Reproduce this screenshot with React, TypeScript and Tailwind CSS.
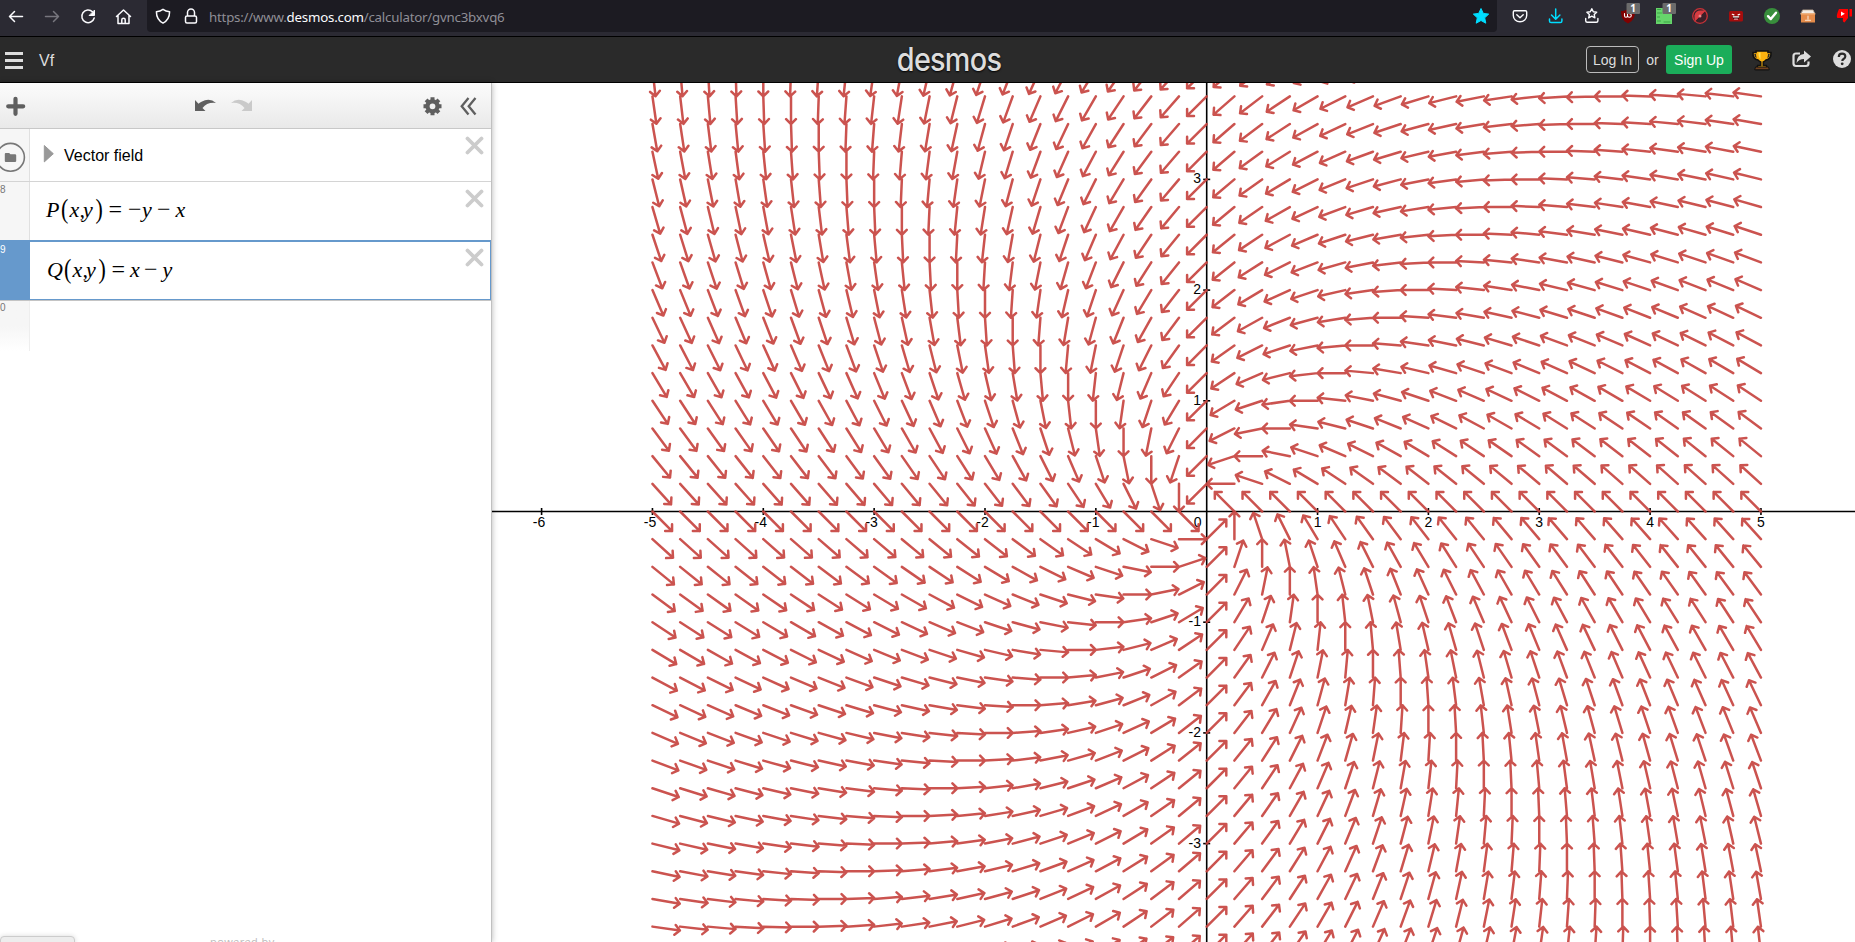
import React from "react";

const OX = 1206.7;
const OY = 511.5;
const UX = 110.85;
const UY = 110.7;
const RED = "#c74440";

function fieldPath(): string {
  const parts: string[] = [];
  for (let i = -20; i <= 20; i++) {
    for (let j = -20; j <= 20; j++) {
      const x = i / 4;
      const y = j / 4;
      const p = -y - x;
      const q = x - y;
      const m = Math.hypot(p, q);
      if (m === 0) continue;
      const sx = OX + x * UX;
      const sy = OY - y * UY;
      const dx = p / m;
      const dy = -q / m;
      const ex = sx + dx * 0.25 * UX;
      const ey = sy + dy * 0.25 * UY;
      const a = Math.atan2(dy, dx);
      const h = 6.9;
      const w = Math.PI * 0.75;
      const pt = (t: number) => `${(ex + Math.cos(t) * h).toFixed(2)} ${(ey + Math.sin(t) * h).toFixed(2)}`;
      parts.push(`M${sx.toFixed(2)} ${sy.toFixed(2)}L${ex.toFixed(2)} ${ey.toFixed(2)}M${pt(a + w)}L${ex.toFixed(2)} ${ey.toFixed(2)}L${pt(a - w)}`);
    }
  }
  return parts.join("");
}

const FIELD = fieldPath();
const XT = [-6, -5, -4, -3, -2, -1, 1, 2, 3, 4, 5];
const YT = [-3, -2, -1, 1, 2, 3];

function Graph() {
  return (
    <svg className="block h-[859px] w-[1363px]" viewBox="492 83 1363 859">
      <g stroke="#000" strokeWidth="1.6">
        <path d={`M492 ${OY}H1855M${OX} 83V942`} />
        {XT.map((t) => (
          <path key={t} d={`M${OX + t * UX} ${OY - 3.5}v7`} />
        ))}
        {YT.map((t) => (
          <path key={t} d={`M${OX - 3.5} ${OY - t * UY}h7`} />
        ))}
      </g>
      <g fontFamily="Liberation Sans, sans-serif" fontSize="14" fill="#000" stroke="#fff" strokeWidth="3" strokeLinejoin="round" paintOrder="stroke">
        {XT.map((t) => (
          <text key={t} x={OX + t * UX - (t < 0 ? 2.5 : 0)} y="527" textAnchor="middle">
            {t}
          </text>
        ))}
        {YT.map((t) => (
          <text key={t} x="1201" y={OY - t * UY + 4} textAnchor="end">
            {t}
          </text>
        ))}
        <text x="1201.500" y="527" textAnchor="end">0</text>
      </g>
      <path d={FIELD} fill="none" stroke={RED} strokeWidth="2.500" strokeLinecap="round" strokeLinejoin="round" opacity="0.92" />
    </svg>
  );
}

function BrowserBar() {
  return (
    <div className="flex h-9 w-full items-start bg-[#2b2a33]">
      <svg className="h-8 w-[147px] shrink-0" viewBox="0 0 147 32" fill="none" stroke="#fbfbfe" strokeWidth="1.5" strokeLinecap="round" strokeLinejoin="round">
        <path d="M22.500 16.500H9.500M14.500 11.500l-5 5 5 5" />
        <path d="M45.500 16.500H58.500M53.500 11.500l5 5-5 5" stroke="#77767e" />
        <path d="M92.500 11.800A6.300 6.300 0 1 0 94.200 18" />
        <path d="M94.500 10.500v5h-5z" fill="#fbfbfe" strokeWidth="1" />
        <path d="M116.500 16.500l7-6.500 7 6.500M118 15.500v8h11v-8M121.800 23.300v-3.500q0-1.500 1.700-1.500t1.700 1.500v3.500" />
      </svg>
      <div className="flex h-8 w-[1350px] shrink-0 items-start rounded-b bg-[#1c1b22]">
        <svg className="h-8 w-[62px] shrink-0" viewBox="147 0 62 32" fill="none" stroke="#fbfbfe" strokeWidth="1.500" strokeLinejoin="round">
          <path d="M163 9.300c2 1.500 4.200 2.200 6.600 2.400 0 5-2 8.900-6.600 11.400-4.600-2.500-6.600-6.400-6.600-11.400 2.400-.2 4.600-.9 6.600-2.400z" />
          <path d="M187 16h8q1.500 0 1.500 1.500v4q0 1.500-1.500 1.500h-8q-1.500 0-1.500-1.500v-4q0-1.500 1.500-1.500zM187.500 16v-3.500a3.500 3.500 0 0 1 7 0V16" />
        </svg>
        <div className="mt-[7px] font-['Noto_Sans',sans-serif] text-[13.3px] leading-5 tracking-[-0.22px] whitespace-pre text-[#8f8e96]">
          https://www.<span className="text-[#fbfbfe]">desmos.com</span>/calculator/gvnc3bxvq6
        </div>
        <div className="grow" />
        <svg className="h-8 w-8 shrink-0" viewBox="1465 0 32 32">
          <path d="M1481 8.500l2.300 4.900 5.400.7-4 3.700 1.100 5.400-4.800-2.700-4.800 2.700 1.100-5.400-4-3.700 5.400-.7z" fill="#00ddff" stroke="#00ddff" strokeLinejoin="round" />
        </svg>
      </div>
      <svg className="h-8 w-[358px] shrink-0" viewBox="1497 0 358 32" fill="none" strokeLinecap="round" strokeLinejoin="round">
        <g stroke="#fbfbfe" strokeWidth="1.4">
          <path d="M1514.500 10.700h11q1.200 0 1.200 1.200v3.600a6.700 6.300 0 0 1-13.400 0v-3.600q0-1.200 1.200-1.200zM1516.800 14.800l3.200 3 3.200-3" />
          <path d="M1591.800 8.700l1.500 3.100 3.400.4-2.500 2.300.7 3.400-3.100-1.700-3.100 1.700.7-3.400-2.500-2.300 3.400-.4zM1585.700 18.500v2.300q0 1.500 1.500 1.500h9.200q1.500 0 1.500-1.500v-2.300" />
        </g>
        <path d="M1555.700 9v10M1551.500 15l4.200 4.200 4.200-4.200M1549.500 19v2q0 1.600 1.600 1.600h9.200q1.600 0 1.600-1.600v-2" stroke="#00ddff" strokeWidth="1.500" />
        <path d="M1628 9c2.500 1.400 4.500 2 7 2 0 6-1.500 9.500-7 12.500-5.500-3-7-6.500-7-12.500 2.500 0 4.500-.6 7-2z" fill="#800000" />
        <path d="M1624.500 13.500v2.200q0 1.500 1.500 1.500t1.500-1.500v-2.200M1627.500 15.700q0 1.500 1.900 1.500t1.900-1.800-1.900-1.800" stroke="#fff" strokeWidth="1.100" />
        <path d="M1656 8h16v16h-16z" fill="#66d46b" />
        <path d="M1657.500 9.500h3M1657.500 13h4M1657.500 17h2M1657.500 21h3M1664 22h6" stroke="#3aa544" strokeWidth="1" />
        <circle cx="1700" cy="16" r="7.300" fill="#3b2028" stroke="#c73238" strokeWidth="1.300" />
        <path d="M1694.500 19.500v-4q1-5 6-5h4l.5.500-5 5-4.500 4.500z" fill="#d83c42" />
        <path d="M1695 21l10-10" stroke="#c73238" strokeWidth="1" />
        <circle cx="1700" cy="16" r="1.500" fill="#f0868a" />
        <rect x="1729" y="11" width="14" height="10.500" rx="1.500" fill="#a50d0d" />
        <path d="M1732.300 14.300l1.600.6M1739.700 14.300l-1.600.6" stroke="#fff" strokeWidth="1.200" />
        <path d="M1732.500 16.500h7q-.5 3.200-3.500 3.200t-3.500-3.200z" fill="#2a0505" />
        <path d="M1733.300 16.800h5.400" stroke="#fff" strokeWidth="1.200" />
        <path d="M1734.500 19.200h3" stroke="#ff8fa0" strokeWidth="1.200" />
        <circle cx="1772" cy="16" r="8" fill="#388e3c" />
        <path d="M1768 16.200l2.800 2.900 5.200-6.300" stroke="#fff" strokeWidth="2.400" />
        <path d="M1803 10h10l2 4h-14z" fill="#f3ece4" stroke="#c7b29c" strokeWidth=".8" />
        <path d="M1801 13.500h14V22.500h-14z" fill="#e58c4b" />
        <path d="M1801 14h14" stroke="#f4b078" />
        <path d="M1808 16v3M1805.500 20.300h5" stroke="#fbe6d4" strokeWidth="1.100" />
        <path d="M1839 9h9v9l-3.500 4.500q-2.300-.3-1.500-4.500h-5.500q-2-1.500 1.500-9z" fill="#f00" />
        <path d="M1849.500 9h2.500v7.500h-2.500z" fill="#f00" />
        <path d="M1841 11.500v4.600l3.800-2.300z" fill="#fff" />
        <rect x="1626.500" y="3" width="13.500" height="11" rx="1" fill="#6b6b6b" />
        <rect x="1662.500" y="3" width="13.500" height="11" rx="1" fill="#6b6b6b" />
        <g fill="#fff" fontFamily="Noto Sans, sans-serif" fontWeight="700" fontSize="10" textAnchor="middle">
          <text x="1633.200" y="12">1</text>
          <text x="1669.200" y="12">1</text>
        </g>
      </svg>
    </div>
  );
}

function AppHeader() {
  return (
    <header className="flex h-[47px] w-full items-center border-y border-black bg-[#2a2a2a] font-['Liberation_Sans',sans-serif] text-[#ddd]">
      <div className="flex w-[895px] shrink-0 items-center">
        <div className="ml-[5px] flex w-[18px] flex-col gap-[4px] pt-px">
          <div className="h-[3px] bg-[#ddd]" />
          <div className="h-[3px] bg-[#ddd]" />
          <div className="h-[3px] bg-[#ddd]" />
        </div>
        <div className="ml-4 pt-[2px] text-base">Vf</div>
      </div>
      <div className="flex w-[107px] shrink-0 justify-center">
        <div className="scale-x-[0.9] font-['Inter',sans-serif] text-[32px] leading-9 font-medium tracking-[-0.8px] [text-shadow:0_1px_2px_#000]">desmos</div>
      </div>
      <div className="flex flex-1 items-center justify-end">
        <div className="flex h-[27px] w-[53px] items-center justify-center rounded border border-[#bbb] text-sm whitespace-nowrap">Log In</div>
        <div className="w-[27px] text-center text-sm">or</div>
        <div className="flex h-[29px] w-[66px] items-center justify-center rounded-[3px] bg-[#1bad5a] text-sm whitespace-nowrap text-white">Sign Up</div>
        <svg className="h-[45px] w-[123px]" viewBox="1732 37 123 45">
          <path d="M1756 51h12v1.500h3q.5 6.500-5 7.500-1.500 1.500-2.700 2v3.500h3l1.200 4h-11l1.200-4h3v-3.500q-1.200-.5-2.700-2-5.500-1-5-7.500h3z" fill="#fbb20f" stroke="#111" strokeWidth="1.600" />
          <path d="M1754.200 54h1.800q0 2 .8 4-2.600-1-2.600-4zM1769.800 54h-1.800q0 2-.8 4 2.600-1 2.600-4z" fill="#2a2a2a" />
          <path d="M1758.500 52.500h2v7q-2-2-2-7z" fill="#ffdf55" />
          <path d="M1755.500 67h13l.8 2.800h-14.600z" fill="#704220" stroke="#111" />
          <path d="M1800 53.500h-4q-2.500 0-2.500 2.500v7.500q0 2.500 2.500 2.500h10q2.500 0 2.500-2.500v-2" fill="none" stroke="#ddd" strokeWidth="2.200" />
          <path d="M1804 50.500l7 6-7 6v-3.600q-5 0-7.500 4 .4-8.300 7.500-8.900z" fill="#ddd" />
          <circle cx="1842" cy="59" r="9" fill="#ddd" />
          <path d="M1838.800 57q0-3.300 3.300-3.300t3.200 2.900q0 1.400-1.700 2.400-1.300.8-1.300 2" fill="none" stroke="#2a2a2a" strokeWidth="2.200" />
          <circle cx="1842.200" cy="63.800" r="1.400" fill="#2a2a2a" />
        </svg>
      </div>
    </header>
  );
}

function Close() {
  return (
    <svg className="mt-[7px] mr-[7px] h-[19px] w-[19px] shrink-0" viewBox="0 0 19 19">
      <path d="M2.500 2.500l14 14M16.500 2.500l-14 14" stroke="#ccc" strokeWidth="3.800" strokeLinecap="round" />
    </svg>
  );
}

type Glyph = [string, number, string?];

function Formula({ glyphs }: { glyphs: Glyph[] }) {
  return (
    <div className="flex grow items-baseline font-['Liberation_Serif',serif] text-[22px] leading-7 text-black">
      {glyphs.map(([g, w, k], i) => (
        <span
          key={i}
          className={k === "p" ? "inline-block shrink-0 origin-[50%_62%] scale-y-125" : k === "o" ? "shrink-0 text-[24px] leading-7" : "shrink-0 italic"}
          style={{ width: w }}
        >
          {g}
        </span>
      ))}
    </div>
  );
}

const P: Glyph[] = [["P", 15], ["(", 8.5, "p"], ["x", 10], [",", 3.5], ["y", 12.5], [")", 13, "p"], ["=", 19.5, "o"], ["−", 14, "o"], ["y", 15], ["−", 18.5, "o"], ["x", 10]];
const Q: Glyph[] = [["Q", 17], ["(", 8.5, "p"], ["x", 10], [",", 3.5], ["y", 12.5], [")", 13, "p"], ["=", 18.5, "o"], ["x", 14], ["−", 18.5, "o"], ["y", 10]];

function Panel() {
  return (
    <aside className="z-10 flex h-[859px] w-[492px] shrink-0 flex-col overflow-hidden border-r border-[#c0c0c0] bg-white font-['Liberation_Sans',sans-serif] shadow-[0_0_6px_rgba(0,0,0,0.3)]">
      <div className="h-[46px] shrink-0 border-b border-[#c8c8c8] bg-linear-to-b from-[#fcfcfc] to-[#e9e9e9]">
        <svg className="h-[45px] w-[491px]" viewBox="0 83 491 45">
          <path d="M8.200 106.300h15M15.500 98.800v15" stroke="#5f5f5f" strokeWidth="4.200" strokeLinecap="round" />
          <path d="M195 100v11h10.500l-3-3q4.500-6 13.500-5-6.500-6-14.500-1.200-2 1-3 2z" fill="#5f5f5f" />
          <path d="M252 100v11h-10.500l3-3q-4.500-6-13.500-5 6.500-6 14.500-1.200 2 1 3 2z" fill="#cacaca" />
          <g stroke="#5f5f5f">
            <circle cx="432.500" cy="106.300" r="5" fill="none" strokeWidth="4.200" />
            <path d="M432.500 97.300v3M432.500 112.300v3M423.500 106.300h3M438.500 106.300h3M426.100 99.900l2 2M436.900 110.700l2 2M438.900 99.900l-2 2M428.100 110.700l-2 2" strokeWidth="4" />
          </g>
          <path d="M468.500 98l-6.800 8.300 6.800 8.300M475.500 98l-6.800 8.300 6.800 8.300" fill="none" stroke="#5f5f5f" strokeWidth="2.300" />
        </svg>
      </div>
      <div className="flex h-[53px] shrink-0 border-b border-[#d4d4d4]">
        <svg className="h-[52px] w-[30px] shrink-0 border-r border-[#e0e0e0] bg-[#f6f6f6]" viewBox="0 129 29 52">
          <circle cx="10.500" cy="157.300" r="13.900" fill="#f6f6f6" stroke="#777" strokeWidth="1.600" />
          <path d="M4.800 154q0-1 1-1h3.400l1.200 1.300h4.600q1.200 0 1.200 1v5.700q0 1-1.200 1H5.800q-1 0-1-1z" fill="#777" />
        </svg>
        <svg className="h-[52px] w-[34px] shrink-0" viewBox="30 129 34 52">
          <path d="M44.300 145.500l9 8.200-9 8.200z" fill="#999" stroke="#999" strokeWidth="1" strokeLinejoin="round" />
        </svg>
        <div className="grow pt-[15px] text-base leading-6 text-black">Vector field</div>
        <Close />
      </div>
      <div className="flex h-[58px] shrink-0">
        <div className="w-[30px] shrink-0 border-r border-[#e0e0e0] bg-[#f6f6f6] pt-[2px] text-[10px] leading-3 text-[#777]">8</div>
        <div className="flex grow pt-[13px] pl-[16px]">
          <Formula glyphs={P} />
        </div>
        <Close />
      </div>
      <div className="flex h-[61px] shrink-0 border-b border-[#c4c4c4] bg-[#6699cc]">
        <div className="w-[30px] shrink-0 pt-[4px] text-[10px] leading-3 text-white">9</div>
        <div className="flex grow border-t-2 border-r border-b border-[#6699cc] bg-white">
          <div className="flex grow pt-[13px] pl-[17px]">
            <Formula glyphs={Q} />
          </div>
          <div className="-mt-px -mr-px">
            <Close />
          </div>
        </div>
      </div>
      <div className="h-[50px] w-[30px] shrink-0 border-r border-[#eee] bg-linear-to-b from-[#f6f6f6] from-50% to-white pt-px text-[10px] leading-3 text-[#777]">0</div>
      <div className="grow" />
      <div className="flex h-[6px] shrink-0 items-start">
        <div className="h-[10px] w-[75px] shrink-0 rounded-t border border-[#ccc] bg-[#ededed] shadow-[0_0_5px_rgba(0,0,0,0.15)]" />
        <div className="-mt-[2px] ml-[135px] font-['Open_Sans',sans-serif] text-[11px] leading-4 tracking-[0.4px] whitespace-nowrap text-[#bbb]">powered by</div>
      </div>
    </aside>
  );
}

export default function App() {
  return (
    <div className="h-[942px] w-[1855px] overflow-hidden bg-white">
      <BrowserBar />
      <AppHeader />
      <main className="flex">
        <Panel />
        <Graph />
      </main>
    </div>
  );
}
